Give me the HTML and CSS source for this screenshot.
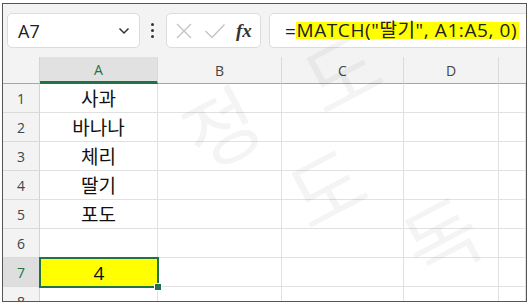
FILE: index.html
```html
<html lang="ko">
  <head>
    <meta charset="UTF-8">
    <title>MATCH</title>
    <link rel="stylesheet" href="styles.css">
  </head>
  <body>
  <div class="frame">
    <div class="toolbar">
      <div class="name-box">
        <span class="name-text">A7</span>
        <svg class="chevron" width="12" height="8" viewBox="0 0 12 8"><path d="M1.5 1.5 L6 6 L10.5 1.5" fill="none" stroke="#333" stroke-width="1.5"/></svg>
      </div>
      <div class="dots"><i></i><i></i><i></i></div>
      <div class="fx-box">
        <svg width="18" height="18" viewBox="0 0 18 18"><path d="M2 2 L16 16 M16 2 L2 16" stroke="#c4c4c4" stroke-width="1.4" fill="none"/></svg>
        <svg width="22" height="18" viewBox="0 0 22 18"><path d="M1.5 9 L8 15.5 L20.5 2.5" stroke="#c4c4c4" stroke-width="1.4" fill="none"/></svg>
        <span class="fx">fx</span>
      </div>
      <div class="formula-box">
        <span class="eq">=</span><span class="hl">MATCH("딸기", A1:A5, 0)</span>
      </div>
    </div>

    <div class="sheet">
      <div class="corner"></div>
      <div class="col-head sel">A</div>
      <div class="col-head">B</div>
      <div class="col-head">C</div>
      <div class="col-head">D</div>
      <div class="col-head last"></div>

      <div class="row-head">1</div><div class="cell">사과</div><div class="cell"></div><div class="cell"></div><div class="cell"></div><div class="cell"></div>
      <div class="row-head">2</div><div class="cell">바나나</div><div class="cell"></div><div class="cell"></div><div class="cell"></div><div class="cell"></div>
      <div class="row-head">3</div><div class="cell">체리</div><div class="cell"></div><div class="cell"></div><div class="cell"></div><div class="cell"></div>
      <div class="row-head">4</div><div class="cell">딸기</div><div class="cell"></div><div class="cell"></div><div class="cell"></div><div class="cell"></div>
      <div class="row-head">5</div><div class="cell">포도</div><div class="cell"></div><div class="cell"></div><div class="cell"></div><div class="cell"></div>
      <div class="row-head">6</div><div class="cell"></div><div class="cell"></div><div class="cell"></div><div class="cell"></div><div class="cell"></div>
      <div class="row-head sel">7</div><div class="cell active">4<span class="handle"></span></div><div class="cell"></div><div class="cell"></div><div class="cell"></div><div class="cell"></div>
      <div class="row-head">8</div><div class="cell"></div><div class="cell"></div><div class="cell"></div><div class="cell"></div><div class="cell"></div>
    </div>

    <!-- faint watermark over the sheet -->
    <div class="watermark">
      <span class="wm w2">정</span>
      <span class="wm w3">도</span>
      <span class="wm w4">도</span>
      <span class="wm w5">독</span>
    </div>
  </div>
  </body>
</html>
```

FILE: styles.css
```css
body {
  margin: 0;
  background: #fff;
  font-family: "Open Sans", "Noto Sans CJK KR", sans-serif;
}

.frame {
  position: relative;
  margin: 3px 0 0 2px;
  width: 523px;
  height: 297px;
  border: 1px solid #555;
  overflow: hidden;
  background: #fff;
}

.toolbar {
  display: flex;
  align-items: center;
  height: 53px;
  padding: 0 0 0 4px;
  background: #f3f3f3;
}

.name-box {
  display: flex;
  align-items: center;
  justify-content: space-between;
  box-sizing: border-box;
  width: 133px;
  height: 35px;
  padding: 0 9px 0 10px;
  background: #fff;
  border: 1px solid #dcdcdc;
  border-radius: 5px;
}

.name-text {
  font-size: 18px;
  color: #222;
}

.dots {
  display: flex;
  flex-direction: column;
  gap: 3px;
  margin: 0 12px 0 11px;
}

.dots i {
  display: block;
  width: 3px;
  height: 3px;
  border-radius: 50%;
  background: #333;
}

.fx-box {
  display: flex;
  align-items: center;
  gap: 11px;
  box-sizing: border-box;
  width: 95px;
  height: 35px;
  padding: 0 0 0 8px;
  background: #fff;
  border: 1px solid #dcdcdc;
  border-radius: 5px;
}

.fx {
  font-family: "Liberation Serif", "DejaVu Serif", serif;
  font-style: italic;
  font-weight: bold;
  font-size: 19px;
  color: #333;
  margin-left: -1px;
}

.formula-box {
  display: flex;
  align-items: center;
  box-sizing: border-box;
  flex: 1;
  height: 35px;
  margin-left: 8px;
  padding-left: 15px;
  background: #fff;
  border: 1px solid #dcdcdc;
  border-right: none;
  border-radius: 5px 0 0 5px;
  font-size: 19px;
  letter-spacing: 0.6px;
  color: #222;
  white-space: nowrap;
}

.hl {
  background: #ffff00;
  line-height: 17px;
  padding-right: 2px;
}

.sheet {
  display: grid;
  grid-template-columns: 37px 118px 124px 122px 95px 1fr;
  grid-template-rows: 27px repeat(8, 29px);
}

.corner,
.col-head {
  background: #f3f3f3;
  border-bottom: 1px solid #a6a6a6;
  box-sizing: border-box;
}

.corner {
  border-right: 1px solid #d4d4d4;
}

.col-head {
  display: flex;
  align-items: center;
  justify-content: center;
  border-right: 1px solid #dadada;
  font-size: 14px;
  color: #444;
}

.col-head.sel {
  background: #e1e1e1;
  color: #217346;
  border-bottom: 3px solid #217346;
}

.col-head.last {
  border-right: none;
}

.row-head {
  display: flex;
  align-items: center;
  justify-content: center;
  box-sizing: border-box;
  background: #f3f3f3;
  border-right: 1px solid #d4d4d4;
  border-bottom: 1px solid #dadada;
  font-size: 14px;
  color: #444;
}

.row-head.sel {
  background: #dedede;
  color: #217346;
}

.cell {
  display: flex;
  align-items: center;
  justify-content: center;
  box-sizing: border-box;
  border-right: 1px solid #e1e1e1;
  border-bottom: 1px solid #e1e1e1;
  font-size: 19px;
  color: #111;
}

.cell.active {
  position: relative;
  background: #ffff00;
  border: 2px solid #217346;
  margin: -1px 0 0 -1px;
  width: 120px;
  height: 31px;
}

.handle {
  position: absolute;
  right: -5px;
  bottom: -5px;
  width: 6px;
  height: 6px;
  background: #217346;
  border: 1px solid #fff;
}

.watermark {
  position: absolute;
  inset: 0;
  pointer-events: none;
  font-family: "Noto Sans CJK KR", sans-serif;
  font-size: 80px;
  color: rgba(0, 0, 0, 0.045);
}

.wm {
  position: absolute;
  display: block;
  transform: rotate(-28deg);
  line-height: 1;
}

.w2 { left: 180px; top: 80px; }
.w3 { left: 300px; top: 25px; }
.w4 { left: 285px; top: 140px; }
.w5 { left: 400px; top: 190px; }
```
